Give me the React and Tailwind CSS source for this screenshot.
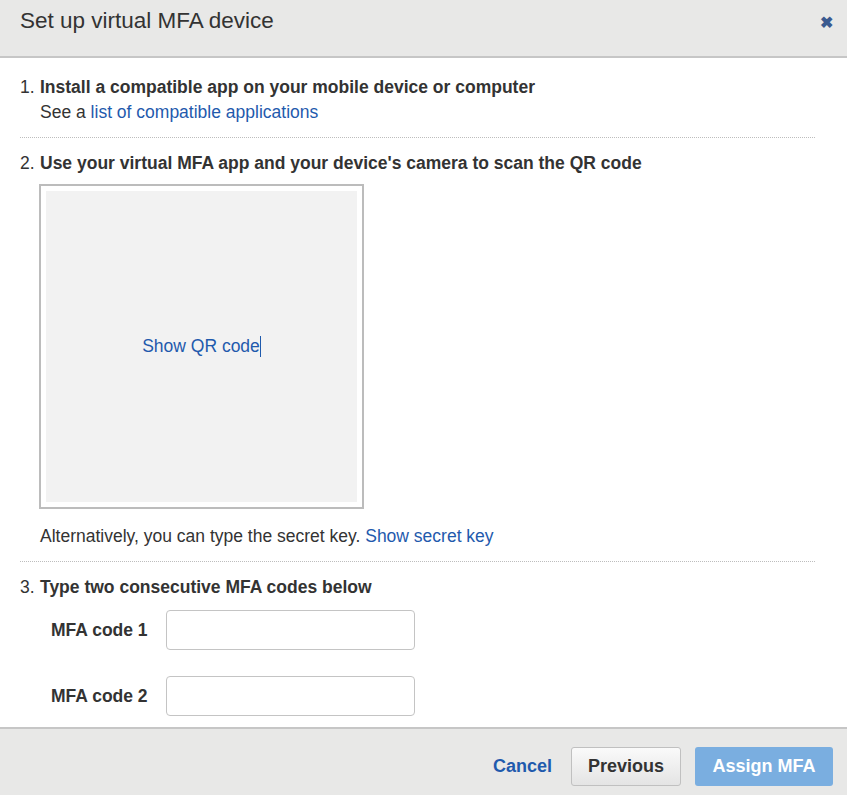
const FONT = { fontFamily: '"Liberation Sans", Arial, sans-serif' }

function Step({ num, children }) {
  return (
    <p className="flex text-[17.5px] text-[#333] leading-[22px]">
      <span className="w-5 shrink-0">{num}.</span>
      <span className="font-bold">{children}</span>
    </p>
  )
}

function CodeField({ label }) {
  return (
    <div className="flex items-center">
      <label className="w-[146px] pl-[31px] font-bold text-[17.5px] text-[#333]">{label}</label>
      <input
        type="text"
        className="w-[249px] h-[40px] rounded-[4px] border border-[#c4c4c4] bg-white outline-none"
      />
    </div>
  )
}

export default function App() {
  return (
    <div className="w-[847px] h-[795px] flex flex-col bg-white" style={FONT}>
      {/* ── header ── */}
      <div className="h-[58px] shrink-0 bg-[#e8e8e7] border-b-2 border-[#c6c6c6] flex justify-between pl-5 pr-[14px] pt-[4px]">
        <h1 className="text-[22.5px] text-[#333]">Set up virtual MFA device</h1>
        <span className="text-[#3b5a8f] font-bold text-[16px] mt-[7px]">✖</span>
      </div>

      {/* ── body ── */}
      <div className="flex-1 px-5 pt-[18px]">
        <Step num={1}>Install a compatible app on your mobile device or computer</Step>
        <p className="pl-5 mt-[3px] text-[17.5px] text-[#333] leading-[22px]">
          See a <a className="text-[#1f5aad]">list of compatible applications</a>
        </p>

        <div className="w-[795px] mt-[14px] border-t border-dotted border-[#bdbdbd]" />

        <div className="mt-[14px]">
          <Step num={2}>Use your virtual MFA app and your device's camera to scan the QR code</Step>
        </div>
        <div className="ml-[19px] mt-[10px] w-[325px] h-[325px] border-2 border-[#bcbcbc] p-[5px]">
          <div className="w-full h-full bg-[#f2f2f2] flex items-center justify-center">
            <span className="text-[17.5px] text-[#1f5aad] flex items-center">
              Show QR code<span className="inline-block w-px h-[21px] bg-[#1f5aad]" />
            </span>
          </div>
        </div>
        <p className="pl-5 mt-[16px] text-[17.5px] text-[#333] leading-[22px]">
          Alternatively, you can type the secret key. <a className="text-[#1f5aad]">Show secret key</a>
        </p>

        <div className="w-[795px] mt-[14px] border-t border-dotted border-[#bdbdbd]" />

        <div className="mt-[14px]">
          <Step num={3}>Type two consecutive MFA codes below</Step>
        </div>
        <div className="mt-[12px] flex flex-col gap-[26px]">
          <CodeField label="MFA code 1" />
          <CodeField label="MFA code 2" />
        </div>
      </div>

      {/* ── footer ── */}
      <div className="h-[68px] shrink-0 bg-[#e8e8e7] border-t-2 border-[#c6c6c6] flex items-start justify-end gap-[14px] pr-[14px] pt-[18px]">
        <button className="text-[#1f5aad] font-bold text-[18px] h-[39px] mr-[5px]">Cancel</button>
        <button className="w-[110px] h-[39px] rounded-[3px] border border-[#c0c0c0] bg-gradient-to-b from-[#fafafa] to-[#e4e4e4] text-[#333] font-bold text-[18px]">
          Previous
        </button>
        <button className="w-[138px] h-[39px] rounded-[3px] bg-[#7aaee0] text-white font-bold text-[18px]">
          Assign MFA
        </button>
      </div>
    </div>
  )
}
